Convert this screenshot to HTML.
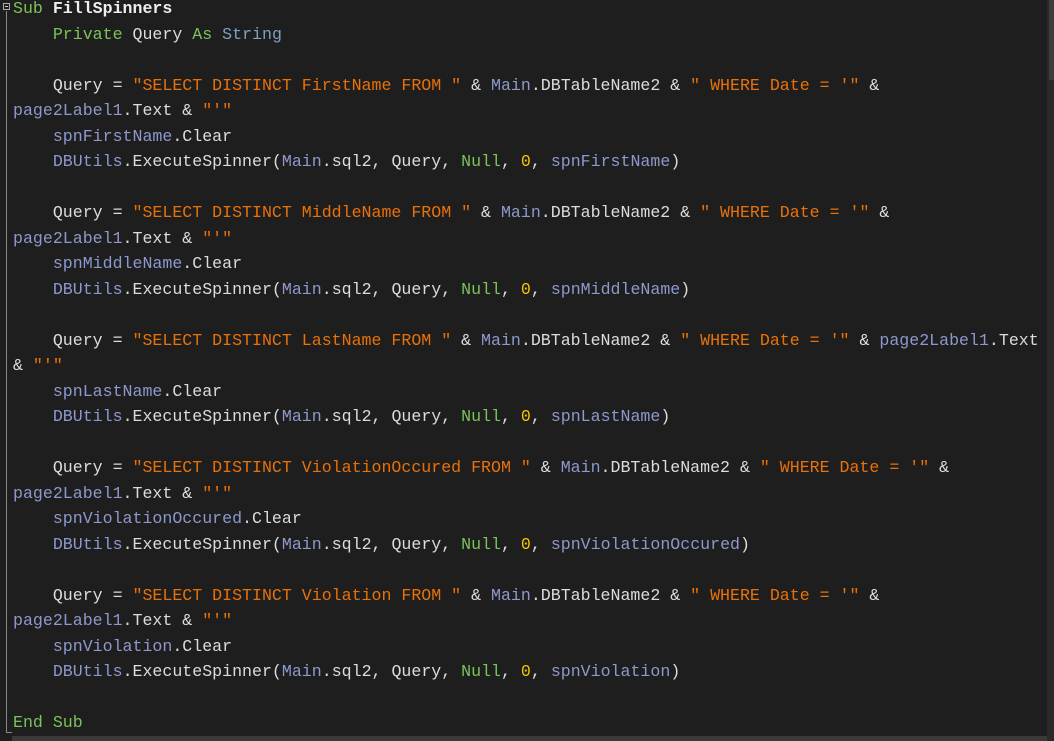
<!DOCTYPE html>
<html><head><meta charset="utf-8"><style>
html,body{margin:0;padding:0;background:#1e1e1e;width:1054px;height:741px;overflow:hidden;position:relative}
.code{position:absolute;left:13px;top:-3.7px;font-family:"Liberation Mono",monospace;font-size:16.6px;color:#dcdcdc}
.l{height:25.5px;line-height:25.5px;white-space:pre}
.k{color:#7bc35a}.s{color:#e8710a}.i{color:#8d98cc}.n{color:#f5c400}.t{color:#7f9fc4}.b{color:#eeeeee;font-weight:bold}
.g{position:absolute;left:3px;top:3px;width:7px;height:7px;border:1px solid #aaa;box-sizing:border-box}
.g:after{content:"";position:absolute;left:1px;top:2px;width:3px;height:1px;background:#ccc}
.vl{position:absolute;left:6px;top:11px;width:1px;height:722px;background:#888}
.hl{position:absolute;left:6px;top:732px;width:6px;height:1px;background:#888}
.sbr{position:absolute;left:1047px;top:0;width:7px;height:741px;background:#2a2a2a}
.sbr2{position:absolute;left:1049px;top:0;width:5px;height:80px;background:#3e3e3e}
.sbb{position:absolute;left:12px;top:736px;width:1035px;height:5px;background:#3a3a3a}
</style></head><body>
<div class="g"></div><div class="vl"></div><div class="hl"></div>
<div class="sbr"></div><div class="sbr2"></div><div class="sbb"></div>
<div class="code"><div class="l"><span class="k">Sub</span> <span class="b">FillSpinners</span></div><div class="l">    <span class="k">Private</span> Query <span class="k">As</span> <span class="t">String</span></div><div class="l"> </div><div class="l">    Query = <span class="s">"SELECT DISTINCT FirstName FROM "</span> &amp; <span class="i">Main</span>.DBTableName2 &amp; <span class="s">" WHERE Date = '"</span> &amp;</div><div class="l"><span class="i">page2Label1</span>.Text &amp; <span class="s">"'"</span></div><div class="l">    <span class="i">spnFirstName</span>.Clear</div><div class="l">    <span class="i">DBUtils</span>.ExecuteSpinner(<span class="i">Main</span>.sql2, Query, <span class="k">Null</span>, <span class="n">0</span>, <span class="i">spnFirstName</span>)</div><div class="l"> </div><div class="l">    Query = <span class="s">"SELECT DISTINCT MiddleName FROM "</span> &amp; <span class="i">Main</span>.DBTableName2 &amp; <span class="s">" WHERE Date = '"</span> &amp;</div><div class="l"><span class="i">page2Label1</span>.Text &amp; <span class="s">"'"</span></div><div class="l">    <span class="i">spnMiddleName</span>.Clear</div><div class="l">    <span class="i">DBUtils</span>.ExecuteSpinner(<span class="i">Main</span>.sql2, Query, <span class="k">Null</span>, <span class="n">0</span>, <span class="i">spnMiddleName</span>)</div><div class="l"> </div><div class="l">    Query = <span class="s">"SELECT DISTINCT LastName FROM "</span> &amp; <span class="i">Main</span>.DBTableName2 &amp; <span class="s">" WHERE Date = '"</span> &amp; <span class="i">page2Label1</span>.Text</div><div class="l">&amp; <span class="s">"'"</span></div><div class="l">    <span class="i">spnLastName</span>.Clear</div><div class="l">    <span class="i">DBUtils</span>.ExecuteSpinner(<span class="i">Main</span>.sql2, Query, <span class="k">Null</span>, <span class="n">0</span>, <span class="i">spnLastName</span>)</div><div class="l"> </div><div class="l">    Query = <span class="s">"SELECT DISTINCT ViolationOccured FROM "</span> &amp; <span class="i">Main</span>.DBTableName2 &amp; <span class="s">" WHERE Date = '"</span> &amp;</div><div class="l"><span class="i">page2Label1</span>.Text &amp; <span class="s">"'"</span></div><div class="l">    <span class="i">spnViolationOccured</span>.Clear</div><div class="l">    <span class="i">DBUtils</span>.ExecuteSpinner(<span class="i">Main</span>.sql2, Query, <span class="k">Null</span>, <span class="n">0</span>, <span class="i">spnViolationOccured</span>)</div><div class="l"> </div><div class="l">    Query = <span class="s">"SELECT DISTINCT Violation FROM "</span> &amp; <span class="i">Main</span>.DBTableName2 &amp; <span class="s">" WHERE Date = '"</span> &amp;</div><div class="l"><span class="i">page2Label1</span>.Text &amp; <span class="s">"'"</span></div><div class="l">    <span class="i">spnViolation</span>.Clear</div><div class="l">    <span class="i">DBUtils</span>.ExecuteSpinner(<span class="i">Main</span>.sql2, Query, <span class="k">Null</span>, <span class="n">0</span>, <span class="i">spnViolation</span>)</div><div class="l"> </div><div class="l"><span class="k">End Sub</span></div></div>
</body></html>
